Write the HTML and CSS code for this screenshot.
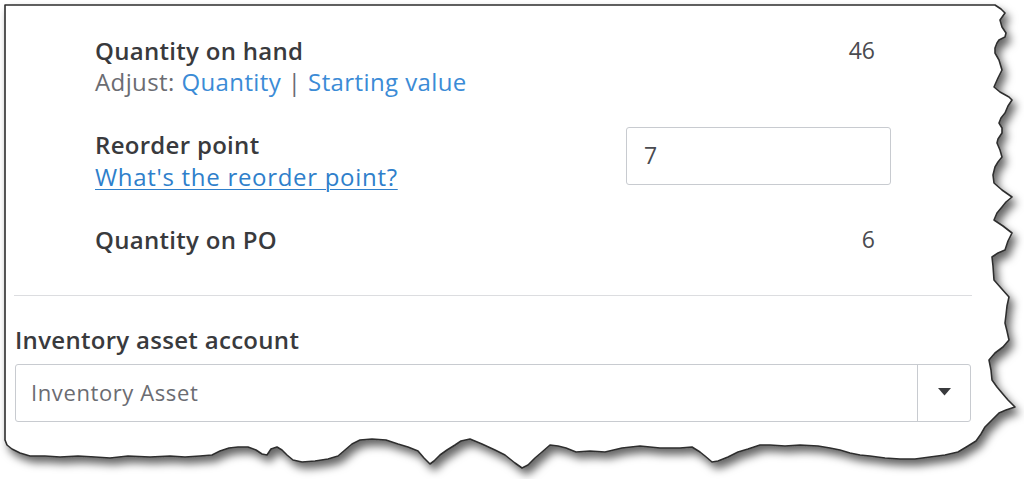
FILE: index.html
```html
<!DOCTYPE html>
<html>
<head>
<meta charset="utf-8">
<link rel="stylesheet" href="styles.css">
</head>
<body>
<div class="page">
  <svg class="paper" width="1024" height="479" viewBox="0 0 1024 479">
    <defs>
      <filter id="shadow" x="-5%" y="-5%" width="115%" height="125%">
        <feDropShadow dx="4" dy="6" stdDeviation="4" flood-color="#000" flood-opacity="0.6"/>
      </filter>
    </defs>
    <path filter="url(#shadow)" fill="#fff" stroke="#2e2e2e" stroke-width="1.6" stroke-linejoin="round"
      d="M5,5 L995,5 L1001,9 L1005,13 L1000,20 L1002,27 L1006,33 L1005,37 L999,40 L997,43 L995,48 L995,53 L999,60 L1002,70 L998,78 L994,87 L1000,92 L1009,97 L1012,100 L1008,106 L1005,113 L1001,118 L999,123 L1002,128 L1002,133 L998,139 L997,143 L1000,150 L1002,157 L998,162 L995,167 L993,175 L994,183 L1002,190 L1012,197 L1006,202 L1002,207 L997,213 L994,220 L1003,226 L1012,233 L1008,241 L1005,250 L998,253 L992,257 L993,266 L994,280 L1001,288 L1009,297 L1007,306 L1006,315 L1005,323 L1007,331 L1009,340 L1003,347 L995,353 L989,360 L991,370 L992,380 L997,387 L1002,393 L1008,400 L1015,407 L1006,410 L999,413 L992,420 L985,427 L981,434 L976,441 L968,446 L958,452 L945,455 L930,457 L915,459 L900,459 L885,458 L870,456 L860,455 L850,453 L840,450 L830,448 L818,446 L800,445 L785,446 L770,445 L760,445 L748,449 L738,452 L728,457 L718,461 L712,462 L705,456 L700,452 L692,447 L680,448 L660,448 L640,446 L622,448 L605,452 L590,451 L576,452 L566,448 L558,446 L550,445 L542,452 L535,458 L528,465 L522,468 L515,463 L505,455 L495,450 L482,444 L470,439 L461,441 L455,445 L447,450 L440,455 L434,461 L430,464 L424,458 L418,451 L408,447 L398,444 L386,440 L372,439 L360,440 L352,444 L345,450 L338,456 L328,459 L315,461 L302,462 L293,460 L287,455 L282,450 L277,447 L271,449 L267,455 L262,454 L256,450 L248,447 L238,447 L229,448 L220,451 L212,455 L200,456 L185,457 L170,456 L150,457 L128,456 L110,458 L95,457 L78,456 L60,457 L45,456 L30,456 L20,453 L12,449 L7,445 L5,440 Z"/>
  </svg>

  <div class="content">
    <div class="details">
      <div class="row">
        <div class="field">
          <div class="label">Quantity on hand</div>
          <div class="sub">Adjust: <span class="link">Quantity</span> <span class="pipe">|</span> <span class="link">Starting value</span></div>
        </div>
        <div class="value">46</div>
      </div>

      <div class="row reorder">
        <div class="field">
          <div class="label">Reorder point</div>
          <a class="help">What's the reorder point?</a>
        </div>
        <div class="input">7</div>
      </div>

      <div class="row po">
        <div class="field">
          <div class="label">Quantity on PO</div>
        </div>
        <div class="value">6</div>
      </div>
    </div>

    <div class="divider"></div>

    <div class="account">
      <div class="label">Inventory asset account</div>
      <div class="select">
        <div class="select-text">Inventory Asset</div>
        <div class="select-btn">
          <svg width="13" height="8" viewBox="0 0 13 8"><path d="M0,0 L13,0 L6.5,7.5 Z" fill="#393a3d"/></svg>
        </div>
      </div>
    </div>
  </div>
</div>
</body>
</html>
```

FILE: styles.css
```css
* { box-sizing: border-box; }
html, body { margin: 0; padding: 0; background: #fff; }
body {
  font-family: "Open Sans", "Liberation Sans", sans-serif;
  color: #393a3d;
}
.page {
  position: relative;
  width: 1024px;
  height: 479px;
  overflow: hidden;
}
.paper {
  position: absolute;
  left: 0;
  top: 0;
}
.content {
  position: relative;
  padding-top: 35px;
}
.details {
  padding-left: 95px;
  width: 891px;
}
.row {
  display: flex;
  justify-content: space-between;
  align-items: flex-start;
}
.label {
  font-size: 24px;
  font-weight: 600;
  line-height: 31px;
  color: #393a3d;
  letter-spacing: 0.3px;
}
.sub {
  font-size: 24px;
  line-height: 31px;
  color: #6b6c72;
  letter-spacing: 0.4px;
}
.link { color: #3b8bd6; }
.pipe { color: #6b6c72; }
.help {
  display: block;
  font-size: 24px;
  line-height: 33px;
  color: #2f7fcb;
  text-decoration: underline;
  text-underline-offset: 3px;
  text-decoration-thickness: 1px;
  letter-spacing: 0.7px;
}
.value {
  font-size: 23px;
  line-height: 31px;
  color: #4a4b50;
  padding-right: 16px;
}
.reorder { margin-top: 30px; }
.reorder .label { margin-top: 2px; }
.input {
  width: 265px;
  height: 58px;
  border: 1px solid #c8cbd0;
  border-radius: 3px;
  font-size: 23px;
  color: #4a4b50;
  padding: 12px 0 0 17px;
  line-height: 31px;
}
.po { margin-top: 31px; }
.divider {
  height: 1px;
  background: #dcdde0;
  margin: 40px 0 0 14px;
  width: 958px;
}
.account {
  padding-left: 15px;
  width: 971px;
  padding-top: 28px;
}
.account .label { margin-bottom: 9px; }
.select {
  display: flex;
  height: 58px;
  border: 1px solid #c8cbd0;
  border-radius: 3px;
}
.select-text {
  flex: 1;
  font-size: 22px;
  color: #6b6c72;
  padding-left: 15px;
  display: flex;
  align-items: center;
  padding-bottom: 2px;
  letter-spacing: 0.6px;
}
.select-btn {
  width: 53px;
  border-left: 1px solid #c8cbd0;
  display: flex;
  align-items: center;
  justify-content: center;
  padding-bottom: 2px;
}
```
